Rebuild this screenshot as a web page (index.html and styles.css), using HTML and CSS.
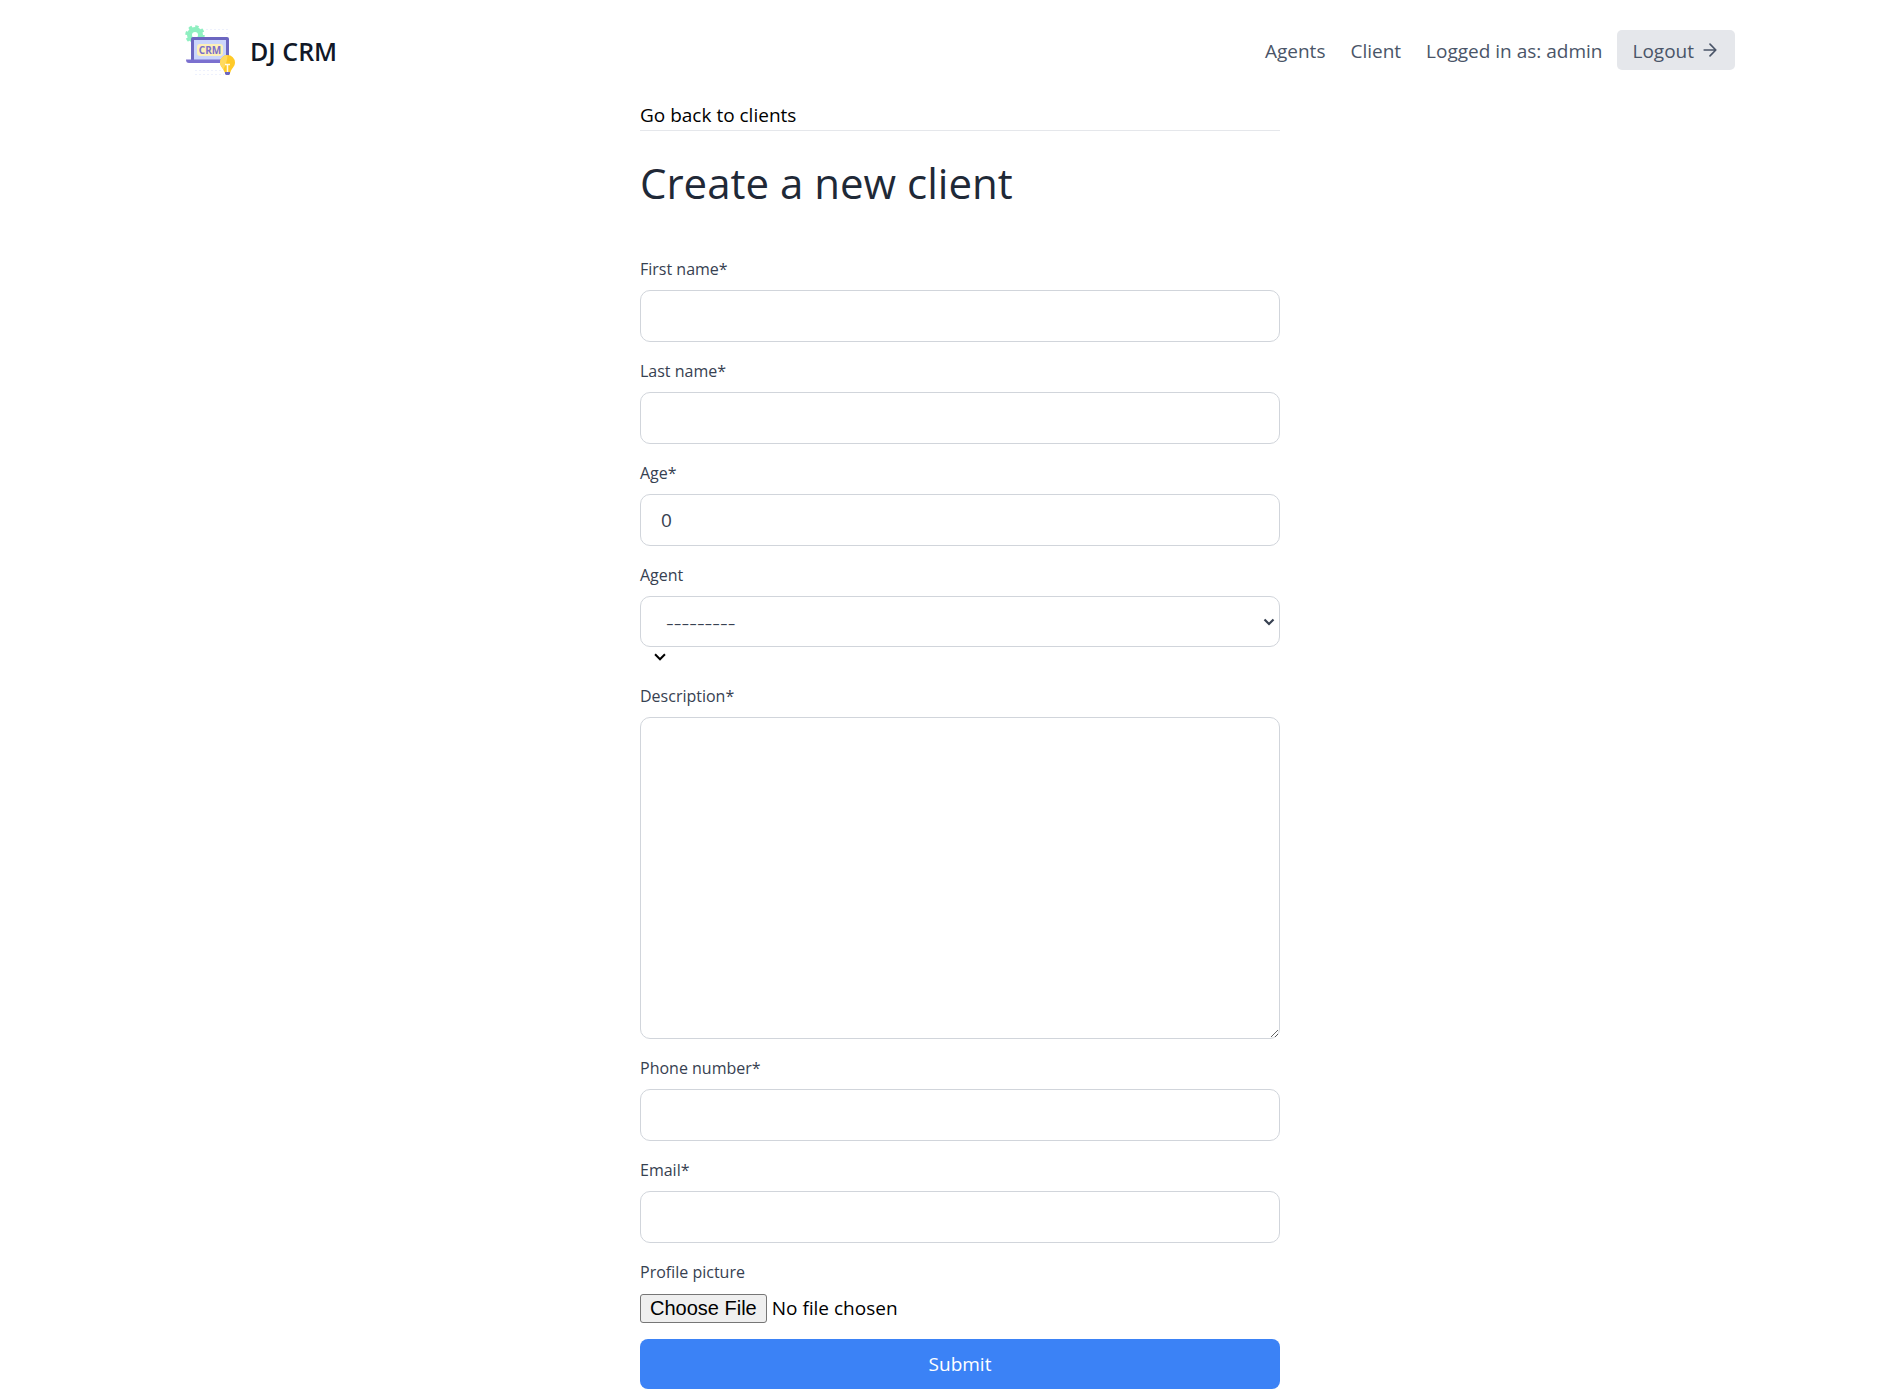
FILE: index.html
```html
<!DOCTYPE html>
<html lang="en">
<head>
<meta charset="utf-8">
<meta name="viewport" content="width=device-width, initial-scale=1">
<title>DJ CRM</title>
<link rel="stylesheet" href="styles.css">
</head>
<body>
<header class="site-header">
  <a class="brand" href="#">
    <svg class="brand-logo" viewBox="0 0 60 60" aria-hidden="true">
      <g fill="none" stroke="#eef1fd" stroke-dasharray="2 2">
        <path d="M26 9.500H48M46 13.500H48M15 50.500H46M15 54.500H44"/>
      </g>
      <circle cx="15" cy="15" r="5.500" fill="none" stroke="#8eefc0" stroke-width="5"/>
      <circle cx="15" cy="15" r="8.500" fill="none" stroke="#8eefc0" stroke-width="2.500" stroke-dasharray="3.400 3.270"/>
      <path d="M11 19a2 2 0 0 1 2-2h34a2 2 0 0 1 2 2v21H11z" fill="#6c66c0"/>
      <path d="M14 20h32v20H14z" fill="#cbd5fb"/>
      <path d="M6 39.500h43v3.500H9q-3 0-3-3.500z" fill="#7b70cf"/>
      <rect x="17" y="24" width="26" height="12" rx="3" fill="#fdf0b8"/>
      <text class="logo-text" x="30" y="33.500" text-anchor="middle">CRM</text>
      <path d="M47.500 35a7.500 7.500 0 0 1 7.500 7.500c0 4.500-4 6-4.500 10h-6c-.5-4-4.500-5.500-4.500-10a7.500 7.500 0 0 1 7.500-7.500z" fill="#ffca28"/>
      <path d="M47.500 35a7.500 7.500 0 0 0-7.500 7.500c0 3 2 4.500 3.500 7 2-5 4-9 4-14.500z" fill="#ffda5e"/>
      <path d="M45 44.500h5M47.500 44.500v8" fill="none" stroke="#fffbe8" stroke-width="1.500"/>
      <path d="M45 52h5v2l-1 1h-3l-1-1z" fill="#6c66c0"/>
    </svg>
    <span class="brand-name">DJ CRM</span>
  </a>
  <nav class="site-nav">
    <a class="nav-link" href="#">Agents</a>
    <a class="nav-link" href="#">Client</a>
    <span class="nav-user">Logged in as: admin</span>
    <button class="logout" type="button"><span class="logout-label">Logout</span>
      <svg class="logout-arrow" viewBox="0 0 24 24" aria-hidden="true"><path d="M5 12h14M12 5l7 7-7 7"/></svg>
    </button>
  </nav>
</header>
<main class="content">
  <div class="back-row"><a class="back-link" href="#">Go back to clients</a></div>
  <h1 class="title">Create a new client</h1>
  <form class="client-form">
    <div class="field">
      <label class="label" for="first-name">First name*</label>
      <input class="control" id="first-name" type="text">
    </div>
    <div class="field">
      <label class="label" for="last-name">Last name*</label>
      <input class="control" id="last-name" type="text">
    </div>
    <div class="field">
      <label class="label" for="age">Age*</label>
      <input class="control" id="age" type="number" value="0">
    </div>
    <div class="field">
      <label class="label" for="agent">Agent</label>
      <select class="control control-select" id="agent"><option>---------</option></select>
      <div class="select-mark">
        <svg class="select-chevron" viewBox="0 0 20 20" aria-hidden="true"><path d="M9.293 12.950l.707.707L15.657 8l-1.414-1.414L10 10.828 5.757 6.586 4.343 8z"/></svg>
      </div>
    </div>
    <div class="field">
      <label class="label" for="description">Description*</label>
      <textarea class="control control-area" id="description"></textarea>
    </div>
    <div class="field">
      <label class="label" for="phone">Phone number*</label>
      <input class="control" id="phone" type="text">
    </div>
    <div class="field">
      <label class="label" for="email">Email*</label>
      <input class="control" id="email" type="email">
    </div>
    <div class="field">
      <label class="label" for="picture">Profile picture</label>
      <input class="file" id="picture" type="file">
    </div>
    <button class="submit" type="submit">Submit</button>
  </form>
</main>
</body>
</html>
```
FILE: styles.css
```css
*,
*::before,
*::after {
  box-sizing: border-box;
}

body {
  margin: 0;
  padding-left: 20px;
  background: #fff;
  color: #000;
  font-family: "Segoe UI", "Open Sans", "Noto Sans", sans-serif;
  font-size: 19px;
  line-height: 30px;
}

a {
  color: inherit;
  text-decoration: none;
}

.site-header {
  display: flex;
  align-items: center;
  justify-content: space-between;
  max-width: 1600px;
  margin: 0 auto;
  padding: 20px 25px 20px 20px;
}

.brand {
  display: flex;
  align-items: center;
  gap: 10px;
}

.brand-logo {
  width: 60px;
  height: 60px;
}

.logo-text {
  fill: #7a6fc8;
  font-size: 10px;
  font-weight: 700;
}

.brand-name {
  padding-top: 2px;
  color: #111827;
  font-size: 25px;
  font-weight: 600;
}

.site-nav {
  display: flex;
  align-items: center;
  color: #4a5568;
}

.nav-link {
  padding-top: 2px;
  margin-right: 25px;
}

.nav-user {
  padding-top: 2px;
  margin-right: 15px;
}

.logout {
  display: flex;
  align-items: center;
  gap: 6px;
  height: 40px;
  padding: 0 15px;
  border: 0;
  border-radius: 5px;
  background: #e5e7eb;
  color: #4a5568;
  font: inherit;
}

.logout-label {
  padding-top: 2px;
}

.logout-arrow {
  width: 20px;
  height: 20px;
  fill: none;
  stroke: currentColor;
  stroke-width: 2;
  stroke-linecap: round;
  stroke-linejoin: round;
}

.content {
  max-width: 640px;
  margin: 0 auto;
}

.back-row {
  padding-top: 1px;
  border-bottom: 1px solid #e5e7eb;
  line-height: 29px;
}

.title {
  margin: 27px 0 47px;
  color: #1f2937;
  font-size: 42px;
  font-weight: 400;
  line-height: 50px;
}

.field {
  margin-bottom: 15px;
}

.label {
  display: block;
  margin-bottom: 6px;
  color: #374151;
  font-size: 16px;
  line-height: 29px;
}

.control {
  display: block;
  width: 100%;
  height: 52px;
  padding: 10px 20px;
  border: 1px solid #d1d5db;
  border-radius: 10px;
  background: #fff;
  color: #374151;
  font: inherit;
}

.control-select {
  height: 51px;
  padding: 0 25px;
  appearance: none;
  background: #fff url("data:image/svg+xml,%3Csvg xmlns='http://www.w3.org/2000/svg' width='12' height='8' viewBox='0 0 12 8'%3E%3Cpath d='M1.500 1.500 6 6l4.500-4.500' fill='none' stroke='%23374151' stroke-width='2.200'/%3E%3C/svg%3E") no-repeat right 4px center;
  font-size: 24px;
  font-weight: 300;
}

.control-area {
  height: 322px;
  resize: both;
}

.select-mark {
  display: flex;
  padding: 0 10px;
}

.select-chevron {
  width: 20px;
  height: 20px;
}

.file {
  display: block;
  width: 100%;
  height: 31px;
  font: inherit;
}

.file::file-selector-button {
  height: 29px;
  margin-right: 5px;
  padding: 0 9px;
  border: 1px solid #767676;
  border-radius: 3px;
  background: #efefef;
  color: #000;
  font: 20px "Liberation Sans", Arial, sans-serif;
}

.submit {
  display: block;
  width: 100%;
  height: 50px;
  border: 0;
  border-radius: 8px;
  background: #3b82f6;
  color: #fff;
  font: inherit;
}
```
